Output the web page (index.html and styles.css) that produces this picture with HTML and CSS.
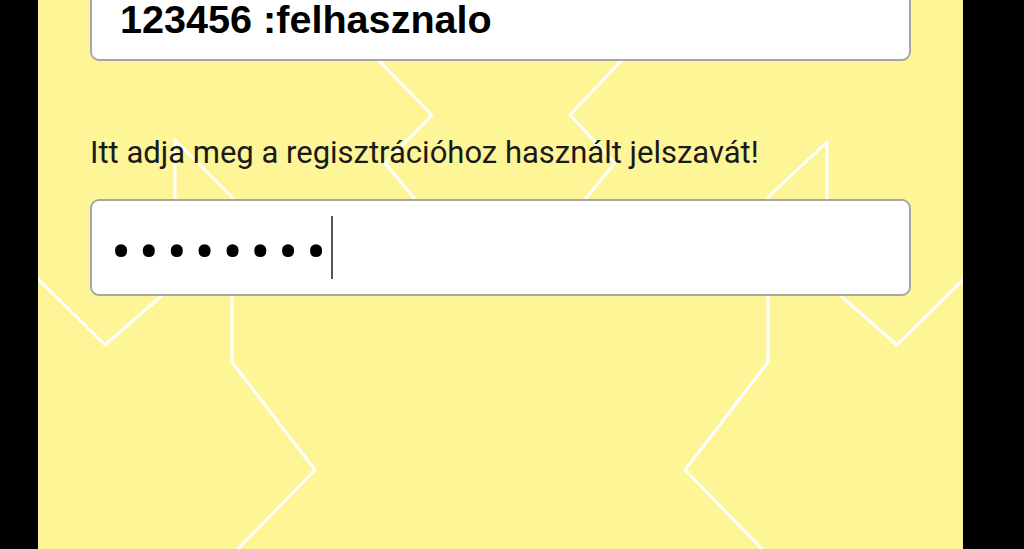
FILE: index.html
```html
<!DOCTYPE html>
<html lang="hu">
<head>
<meta charset="utf-8">
<title>Bejelentkezés</title>
<link rel="stylesheet" href="styles.css">
</head>
<body>
<div class="screen">
  <svg class="pattern" viewBox="38 0 925 549" width="925" height="549" aria-hidden="true">
    <g fill="none" stroke="#ffffff" stroke-width="3" stroke-linejoin="round" stroke-linecap="round">
      <polyline points="175,140 175,284 105,345 30,271"/>
      <polyline points="827,142 827,284 897,345 972,271"/>
      <polyline points="175,140 232,197 232,362 315,470 235,552"/>
      <polyline points="827,142 768,197 768,362 685,470 765,552"/>
      <polyline points="330,10 380,62 432,115 385,163 420,205"/>
      <polyline points="670,10 620,62 570,115 615,163 580,205"/>
    </g>
  </svg>
  <div class="content">
    <div class="field field-user">
      <span class="user-text">123456 :felhasznalo</span>
    </div>
    <p class="label">Itt adja meg a regisztrációhoz használt jelszavát!</p>
    <div class="field field-pass">
      <span class="dots">••••••••</span><span class="caret"></span>
    </div>
  </div>
</div>
</body>
</html>
```
FILE: styles.css
```css
html, body {
  margin: 0;
  padding: 0;
  background: #000;
}

.screen {
  position: relative;
  width: 925px;
  height: 549px;
  margin-left: 38px;
  background: #fdf596;
  overflow: hidden;
  box-sizing: border-box;
  padding: 0 52px;
}

.pattern {
  position: absolute;
  left: 0;
  top: 0;
  z-index: 0;
}

.content {
  position: relative;
  z-index: 1;
  display: flex;
  flex-direction: column;
}

.field {
  box-sizing: border-box;
  background: #fff;
  border: 2px solid #a6a6a6;
  border-radius: 9px;
  display: flex;
  align-items: center;
}

.field-user {
  margin-top: -23px;
  height: 84px;
  padding-left: 28px;
}

.user-text {
  font-family: "Liberation Sans", Arial, sans-serif;
  font-weight: bold;
  font-size: 39.6px;
  line-height: 36px;
  color: #000;
}

.label {
  margin: 74px 0 0 0;
  font-family: Roboto, "Noto Sans", sans-serif;
  font-size: 31px;
  line-height: 36px;
  color: #1a1a1a;
}

.field-pass {
  margin-top: 28px;
  height: 97px;
  padding-left: 19px;
}

.dots {
  font-family: Roboto, sans-serif;
  font-size: 60px;
  letter-spacing: 7.6px;
  color: #000;
  line-height: 1;
  position: relative;
  top: 5px;
}

.caret {
  display: inline-block;
  width: 2px;
  height: 63px;
  background: #555;
  margin-left: -3px;
}
```
